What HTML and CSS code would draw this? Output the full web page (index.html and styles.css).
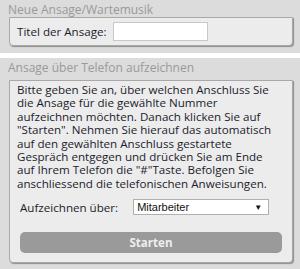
FILE: index.html
```html
<!DOCTYPE html>
<html lang="de">
<head>
	<meta charset="UTF-8">
	<title>Ansage</title>
	<link rel="stylesheet" href="styles.css">
</head>
<body>
	<div class="panel panel-top">
		<div class="legend">Neue Ansage/Wartemusik</div>
		<div class="box box-title">
			<label class="label">Titel der Ansage:</label>
			<input type="text" class="txt">
		</div>
	</div>
	<div class="panel panel-bottom">
		<div class="legend">Ansage über Telefon aufzeichnen</div>
		<div class="box box-phone">
			<p class="info">Bitte geben Sie an, über welchen Anschluss Sie<br>
			die Ansage für die gewählte Nummer<br>
			aufzeichnen möchten. Danach klicken Sie auf<br>
			"Starten". Nehmen Sie hierauf das automatisch<br>
			auf den gewählten Anschluss gestartete<br>
			Gespräch entgegen und drücken Sie am Ende<br>
			auf Ihrem Telefon die "#"Taste. Befolgen Sie<br>
			anschliessend die telefonischen Anweisungen.</p>
			<div class="row">
				<span class="label">Aufzeichnen über:</span>
				<div class="select">
					<span>Mitarbeiter</span>
					<span class="arrow">&#9660;</span>
				</div>
			</div>
			<div class="btn">Starten</div>
		</div>
	</div>
</body>
</html>
```

FILE: styles.css
```css
*{
	margin: 0;
	padding: 0;
	box-sizing: border-box;
}
body{
	width: 300px;
	height: 269px;
	background: #fff;
	font-family: "Open Sans", "Noto Sans", sans-serif;
	font-size: 11.6px;
	color: #1c1c2c;
	overflow: hidden;
}
.panel{
	background: #dcdcdc;
	padding: 2px 7px 0 9px;
}
.panel-top{
	height: 53px;
}
.panel-bottom{
	margin-top: 5px;
	height: 211px;
}
.legend{
	color: #9a9a9a;
	font-size: 12px;
	line-height: 15px;
	margin-left: -1px;
}
.box{
	background: #ececec;
	border: 1px solid #a8a8a8;
	border-radius: 0 0 4px 4px;
	box-shadow: 1px 1px 1px #8c8c8c;
}
.box-title{
	height: 29px;
	display: flex;
	align-items: center;
	padding-left: 7px;
}
.txt{
	width: 95px;
	height: 19px;
	margin-left: 6px;
	border: 1px solid #c8c8c8;
	background: #fff;
	outline: none;
}
.box-phone{
	margin-top: 5px;
	height: 183px;
	padding: 2px 7px 0 7px;
}
.info{
	line-height: 13.4px;
	white-space: nowrap;
}
.row{
	display: flex;
	align-items: center;
	margin-top: 9px;
	padding-left: 3px;
}
.select{
	width: 136px;
	height: 16px;
	margin-left: 15px;
	background: #fff;
	border: 1px solid #b0b0b0;
	display: flex;
	justify-content: space-between;
	align-items: center;
	padding: 0 6px 0 3px;
	font-family: "Liberation Sans", Arial, sans-serif;
	font-size: 11px;
	color: #111;
}
.arrow{
	font-size: 8px;
}
.btn{
	margin: 17px 3px 0 3px;
	height: 21px;
	background: #9a9a9a;
	border-radius: 5px;
	color: #eee;
	font-weight: bold;
	text-align: center;
	line-height: 21px;
}
```
